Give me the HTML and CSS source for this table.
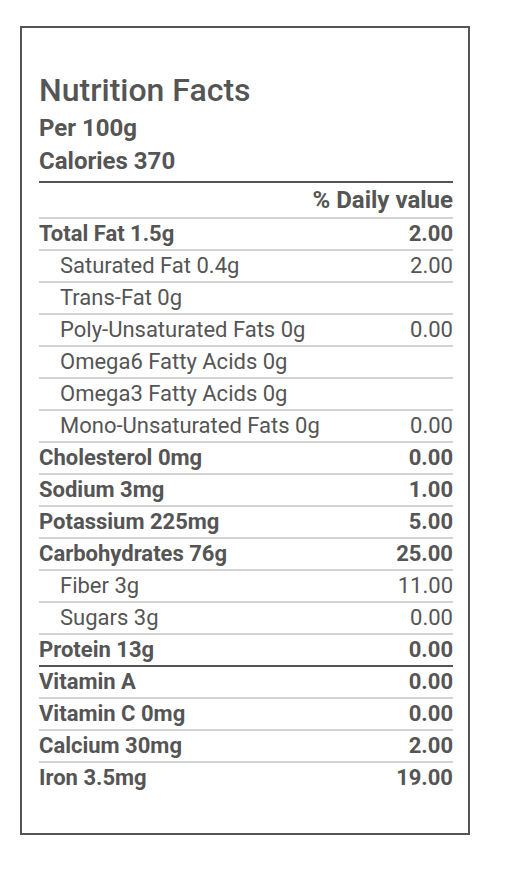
FILE: index.html
```html
<!DOCTYPE html>
<html lang="en">
<head>
	<meta charset="UTF-8">
	<title>Nutrition Facts</title>
	<link rel="stylesheet" href="styles.css">
</head>
<body>
	<div id="label">
		<h1 class="title">Nutrition Facts</h1>
		<p class="sub">Per 100g</p>
		<p class="sub">Calories 370</p>
		<div class="row head">
			<span></span>
			<span>% Daily value</span>
		</div>
		<ul id="facts">
			<li class="main"><span>Total Fat 1.5g</span><span>2.00</span></li>
			<li class="child"><span>Saturated Fat 0.4g</span><span>2.00</span></li>
			<li class="child"><span>Trans-Fat 0g</span><span></span></li>
			<li class="child"><span>Poly-Unsaturated Fats 0g</span><span>0.00</span></li>
			<li class="child"><span>Omega6 Fatty Acids 0g</span><span></span></li>
			<li class="child"><span>Omega3 Fatty Acids 0g</span><span></span></li>
			<li class="child"><span>Mono-Unsaturated Fats 0g</span><span>0.00</span></li>
			<li class="main"><span>Cholesterol 0mg</span><span>0.00</span></li>
			<li class="main"><span>Sodium 3mg</span><span>1.00</span></li>
			<li class="main"><span>Potassium 225mg</span><span>5.00</span></li>
			<li class="main"><span>Carbohydrates 76g</span><span>25.00</span></li>
			<li class="child"><span>Fiber 3g</span><span>11.00</span></li>
			<li class="child"><span>Sugars 3g</span><span>0.00</span></li>
			<li class="main"><span>Protein 13g</span><span>0.00</span></li>
			<li class="main split"><span>Vitamin A</span><span>0.00</span></li>
			<li class="main"><span>Vitamin C 0mg</span><span>0.00</span></li>
			<li class="main"><span>Calcium 30mg</span><span>2.00</span></li>
			<li class="main"><span>Iron 3.5mg</span><span>19.00</span></li>
		</ul>
	</div>
</body>
</html>
```

FILE: styles.css
```css
*{
	margin:0;
	padding:0;
}
ul{
	list-style:none;
}
body{
	font-family:Roboto, "Liberation Sans", sans-serif;
	color:#555;
	background:#fff;
}
#label{
	width:414px;
	height:761px;
	margin:26px 0 0 20px;
	padding:44px 15px 0 17px;
	border:2px solid #555;
}
.title{
	font-size:32px;
	font-weight:500;
	line-height:36px;
}
.sub{
	font-size:24px;
	font-weight:700;
	line-height:33px;
}
.sub:first-of-type{
	margin-top:4px;
}
.row,
#facts li{
	display:flex;
	justify-content:space-between;
	font-size:22px;
	line-height:30px;
}
.head{
	margin-top:3px;
	border-top:2px solid #555;
	font-size:24px;
	line-height:34px;
	font-weight:700;
}
#facts li{
	border-top:2px solid #d3d3d3;
}
#facts .main{
	font-weight:700;
}
#facts .child{
	font-weight:400;
}
#facts .child span:first-child{
	padding-left:21px;
}
#facts .split{
	border-top-color:#555;
}
```
